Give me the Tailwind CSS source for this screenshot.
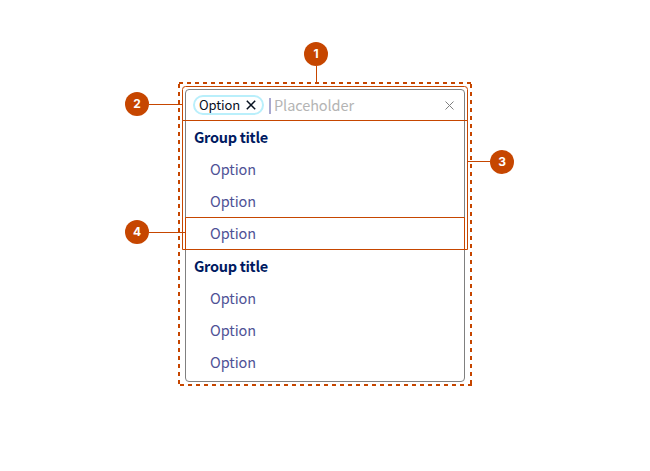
<!DOCTYPE html>
<html lang="en">
<head>
<meta charset="utf-8">
<title>Combobox anatomy</title>
<script src="https://cdn.jsdelivr.net/npm/@tailwindcss/browser@4"></script>
</head>
<body class="bg-white">
<main class="relative h-[471px] w-[650px] overflow-hidden pt-[89px] pl-[185px] font-['Noto_Sans_CJK_SC','Noto_Sans',sans-serif]">
  <section class="flex h-[293px] w-[280px] flex-col rounded-[4px] border border-[#808080] pl-2 text-[14.5px] tracking-[-0.08px] text-[#4f5296]">
    <div class="flex h-[30px] shrink-0 items-center">
      <div class="-ml-px flex h-5 w-[71px] shrink-0 items-center justify-between rounded-full border-2 border-[#b9effb] pr-[6px] pl-1 text-[13px] leading-4 tracking-[-0.1px] text-[#07101f]">
        <span>Option</span>
        <svg class="size-[10px]" viewBox="0 0 10 10" fill="none" stroke="currentColor" stroke-width="1.5"><path d="M.8.8 9.200 9.200M9.200.8.8 9.200"/></svg>
      </div>
      <span class="mt-px ml-[5px] h-4 w-[1.5px] bg-[#a9a9d0]"></span>
      <span class="ml-[3.500px] leading-5 text-[#b4b4b4]">Placeholder</span>
      <svg class="mr-[10px] ml-auto size-[9px]" viewBox="0 0 9 9" fill="none" stroke="#808080"><path d="M.5.5 8.5 8.5M8.5.5.5 8.5"/></svg>
    </div>
    <h2 class="mt-px flex h-8 shrink-0 items-center font-bold tracking-[-0.3px] text-[#001a61]">Group title</h2>
    <ul class="pl-4">
      <li class="flex h-8 items-center">Option</li>
      <li class="flex h-8 items-center">Option</li>
      <li class="flex h-8 items-center">Option</li>
    </ul>
    <h2 class="mt-px flex h-8 shrink-0 items-center font-bold tracking-[-0.3px] text-[#001a61]">Group title</h2>
    <ul class="pl-4">
      <li class="flex h-8 items-center">Option</li>
      <li class="flex h-8 items-center">Option</li>
      <li class="flex h-8 items-center">Option</li>
    </ul>
  </section>
  <!-- Numbered callouts and outlines over the component -->
  <svg class="absolute inset-0" width="650" height="471" viewBox="0 0 650 471" fill="none" stroke="#c64600">
    <g stroke-width="2" stroke-dasharray="4 4">
      <path d="M179 84V385" />
      <path d="M471 84V385" />
      <path d="M179 83H472" />
      <path d="M180 385H472" />
    </g>
    <path d="M182.5 120.5V89.5a3 3 0 0 1 3-3H464.500a3 3 0 0 1 3 3V120.500Z"/>
    <path d="M182.500 120.500H467.500V249.500H182.500Z"/>
    <path d="M185.500 217.500H464.500V249.500H185.500Z"/>
    <path d="M316.500 66V82M149 104.500H182M468 161.500H490M149 232.500H185"/>
    <g fill="#c64600" stroke="none">
      <circle cx="316" cy="54" r="12"/><circle cx="137" cy="104" r="12"/><circle cx="502" cy="162" r="12"/><circle cx="137" cy="232" r="12"/>
    </g>
    <g class="font-['Inter',sans-serif] text-[12px] font-bold" fill="#fff" stroke="none" text-anchor="middle">
      <text x="316" y="58">1</text><text x="137" y="108">2</text><text x="502" y="166">3</text><text x="137" y="236">4</text>
    </g>
  </svg>
</main>
</body>
</html>
